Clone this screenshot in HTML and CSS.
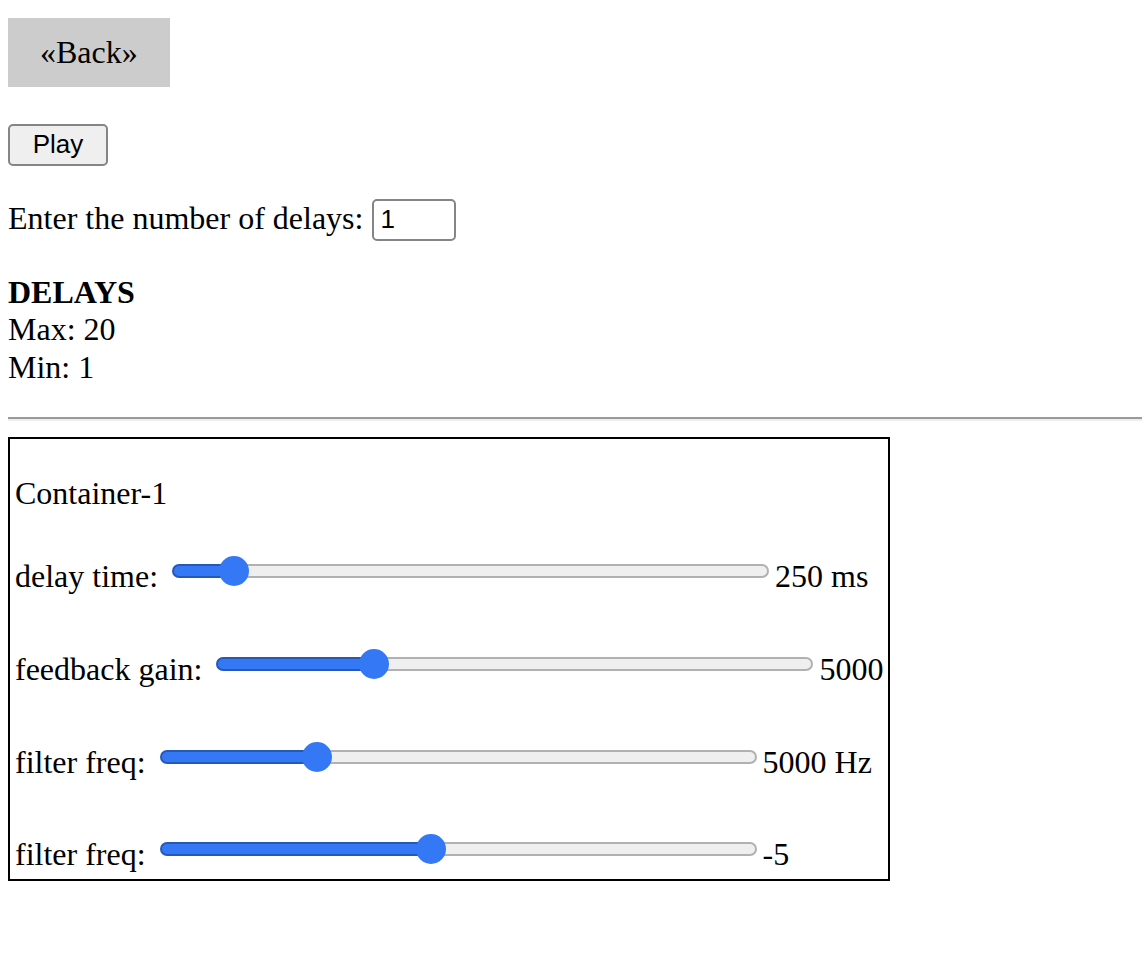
FILE: index.html
```html
<!DOCTYPE html>
<html lang="en">
<head>
<meta charset="utf-8">
<title>Delays</title>
<link rel="stylesheet" href="styles.css">
</head>
<body>
<div class="nav"><a class="back" href="#">«Back»</a></div>
<div class="controls"><button class="play" type="button">Play</button></div>
<div class="count">Enter the number of delays: <input class="num" type="text" value="1"></div>
<div class="info"><strong>DELAYS</strong><br>Max: 20<br>Min: 1</div>
<hr class="rule">
<div class="box">
  <div class="title">Container-1</div>
  <div class="row first">delay time: <input class="slider" type="range" min="0" max="1000" value="80" style="--fill:62px">250 ms</div>
  <div class="row">feedback gain: <input class="slider" type="range" min="0" max="1000" value="249" style="--fill:157px">5000</div>
  <div class="row">filter freq: <input class="slider" type="range" min="0" max="1000" value="249" style="--fill:157px">5000 Hz</div>
  <div class="row">filter freq: <input class="slider" type="range" min="0" max="1000" value="451" style="--fill:271px">-5</div>
</div>
</body>
</html>
```
FILE: styles.css
```css
html, body {
  margin: 0;
  background: #fff;
}
body {
  padding: 18px 8px 0;
  font-family: "Liberation Serif", "Times New Roman", serif;
  font-size: 32px;
  color: #000;
}
.nav {
  display: flex;
}
.back {
  display: inline-block;
  background: #cccccc;
  color: #000;
  text-decoration: none;
  padding: 16px 32px;
  line-height: 36.8px;
}
.controls {
  display: flex;
  margin-top: 37px;
}
.play {
  box-sizing: border-box;
  width: 100px;
  height: 42px;
  margin: 0;
  padding: 0;
  font-family: "Liberation Sans", Arial, sans-serif;
  font-size: 26px;
  color: #000;
  background: #efefef;
  border: 2px solid #858585;
  border-radius: 5px;
}
.count {
  margin-top: 33px;
  line-height: 36.8px;
}
.num {
  box-sizing: border-box;
  width: 84px;
  height: 42px;
  margin: 0 0 0 1px;
  padding: 0 6px;
  font-family: "Liberation Sans", Arial, sans-serif;
  font-size: 26px;
  color: #000;
  background: #fff;
  border: 2px solid #858585;
  border-radius: 5px;
  vertical-align: baseline;
}
.info {
  margin-top: 33px;
  line-height: 37.5px;
}
.rule {
  margin: 31px -8px 0 0;
  height: 0;
  border: 0;
  border-top: 2px solid #9a9a9a;
  border-bottom: 2px solid #eeeeee;
}
.box {
  box-sizing: border-box;
  width: 882px;
  margin-top: 16px;
  border: 2px solid #000;
  padding: 4px 5px 6px;
}
.title {
  margin-top: 32px;
  line-height: 36.8px;
}
.row {
  margin-top: 53px;
  line-height: 36.8px;
  white-space: nowrap;
}
.row.first {
  margin-top: 43px;
}
.slider {
  -webkit-appearance: none;
  appearance: none;
  box-sizing: border-box;
  width: 597px;
  height: 32px;
  margin: 0 6px;
  padding: 0;
  background: transparent;
  vertical-align: baseline;
}
.slider::-webkit-slider-runnable-track {
  box-sizing: border-box;
  height: 14px;
  border: 2px solid rgba(0, 0, 0, 0.26);
  border-radius: 7px;
  background: linear-gradient(to right, #3478f6 var(--fill), #efefef var(--fill));
  background-origin: border-box;
}
.slider::-webkit-slider-thumb {
  -webkit-appearance: none;
  appearance: none;
  width: 30px;
  height: 30px;
  margin-top: -10px;
  border: 0;
  border-radius: 50%;
  background: #3478f6;
}
```
